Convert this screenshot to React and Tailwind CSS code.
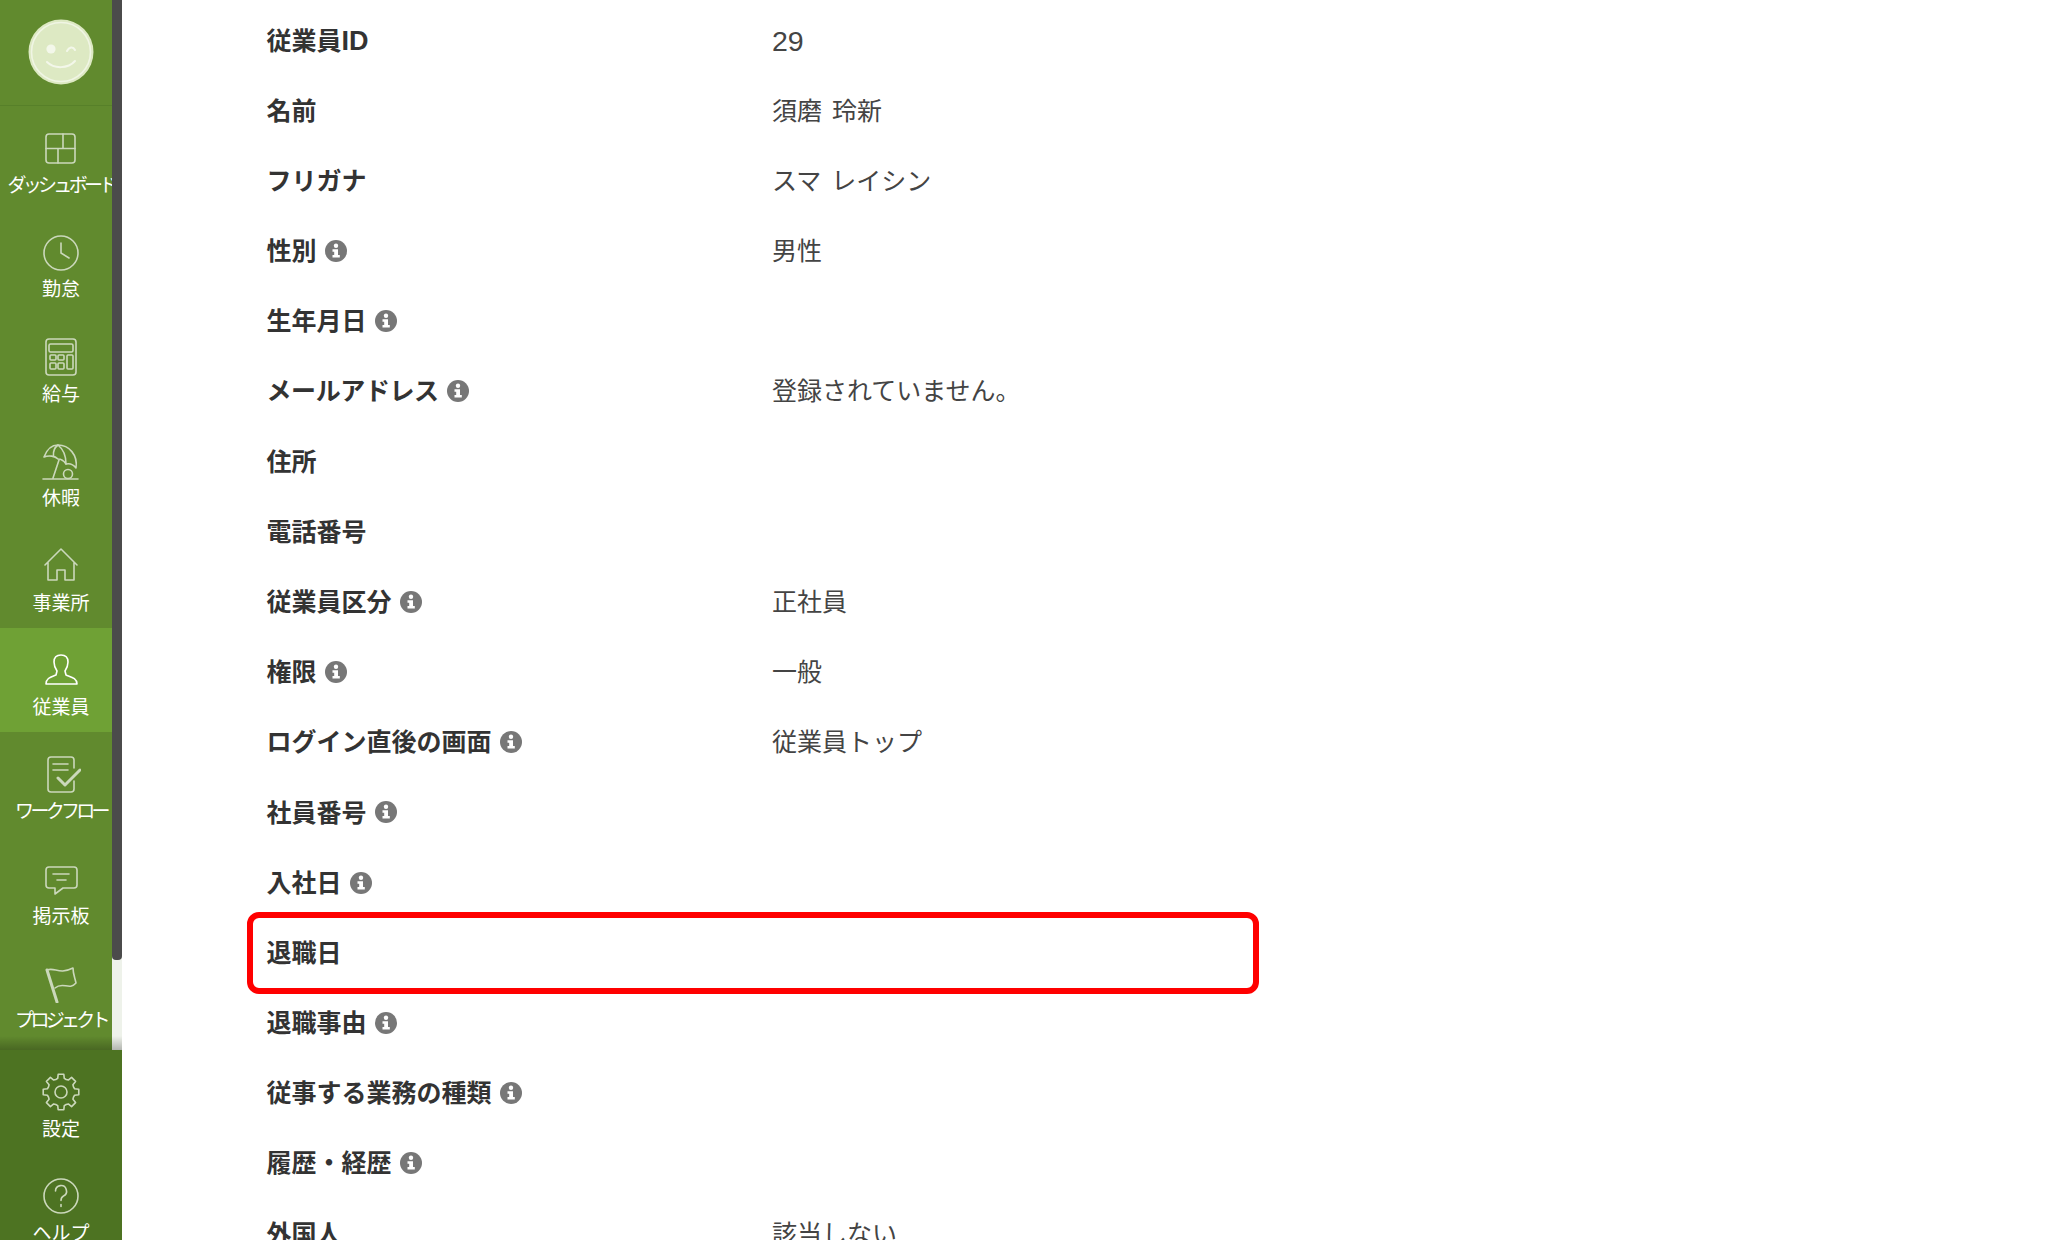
const gearPath = (() => {
  const teeth = 8;
  const pts = [];
  for (let i = 0; i < teeth; i++) {
    const a = (i / teeth) * Math.PI * 2;
    const step = (Math.PI * 2) / teeth;
    [[13.5, -0.5], [14, -0.3], [18, -0.2], [18, 0.2], [14, 0.3], [13.5, 0.5]].forEach(([r, o]) => {
      const t = a + o * step;
      pts.push(`${(20 + r * Math.sin(t)).toFixed(2)} ${(20 - r * Math.cos(t)).toFixed(2)}`);
    });
  }
  return "M" + pts.join("L") + "Z";
})();

const icons = {
  dashboard: (
    <>
      <rect x="5" y="6" width="29" height="29" rx="3" />
      <path d="M5 20.5H34M22 6V20.5M17 20.5V35" />
    </>
  ),
  clock: (
    <>
      <circle cx="20" cy="21" r="17" />
      <path d="M20 11V21L28 26" />
    </>
  ),
  calc: (
    <>
      <rect x="5" y="2" width="30" height="36" rx="3" />
      <rect x="8" y="7" width="24" height="8" rx="1.5" />
      <rect x="9" y="18" width="6" height="5" rx="1" />
      <rect x="17" y="18" width="6" height="5" rx="1" />
      <rect x="9" y="26" width="6" height="6" rx="1" />
      <rect x="17" y="26" width="6" height="6" rx="1" />
      <rect x="26" y="18" width="6" height="14" rx="1" />
    </>
  ),
  parasol: (
    <>
      <path d="M3 16C6 8 11 4 17 4C28 4 37 14 35 27C32 23 29 22 25 23C23 20 20 18 17 18C14 15 8 14 3 16Z" />
      <path d="M17 4C13 7 12 11 12.5 15M17 4C22 8 25 15 25 23M18 19L12 37M2 38H37" />
      <circle cx="27" cy="33" r="4.5" />
    </>
  ),
  home: <path d="M4 19L20 3L36 19M7 16V34H16V24H24V34H33V16" />,
  user: <path d="M5 34C5 28 10 27 15 25L16 21C14 18 13 15 13 12C13 7 16 5 20 5C24 5 27 7 27 12C27 15 26 18 24 21L25 25C30 27 36 28 36 34Z" />,
  flow: (
    <>
      <path d="M33 14V6C33 4 32 3 30 3H10C8 3 7 4 7 6V35C7 37 8 38 10 38H30C32 38 33 37 33 35V27" />
      <path d="M12 10H27M12 16H27" />
      <path d="M17 24L24 31L39 16" strokeWidth="3" />
    </>
  ),
  chat: (
    <>
      <path d="M8 8H33C35 8 36 9 36 11V26C36 28 35 29 33 29H22L14 35V29H8C6 29 5 28 5 26V11C5 9 6 8 8 8Z" />
      <path d="M12 15H28M16 21H25" />
    </>
  ),
  flag: (
    <>
      <path d="M6 7L16 39" strokeWidth="3" />
      <path d="M6 7C14 4 18 12 32 5C32 11 34 15 35 20C28 28 22 18 14 25" />
    </>
  ),
  gear: (
    <>
      <path d={gearPath} />
      <circle cx="20" cy="20" r="6" />
    </>
  ),
  help: (
    <>
      <circle cx="20" cy="20" r="17" />
      <path d="M14.5 15A5.5 5.5 0 1 1 22.5 20C20.5 21 20 22.5 20 24.5M20 28.5V30.5" />
    </>
  ),
};

const Icon = ({ name, active }) => (
  <svg
    viewBox="0 0 40 40"
    className={active ? "w-10 h-10 mx-auto stroke-white" : "w-10 h-10 mx-auto stroke-[#cbd8bb]"}
    fill="none"
    strokeWidth="1.6"
    strokeLinejoin="round"
    strokeLinecap="round"
  >
    {icons[name]}
  </svg>
);

const NavItem = ({ name, label, active, tracking }) => (
  <div className={active ? "h-[104.4px] pt-[22px] bg-[#6fa135] shrink-0" : "h-[104.4px] pt-[22px] shrink-0"}>
    <Icon name={name} active={active} />
    <div className={`h-[35px] leading-[35px] text-center text-[19px] text-white whitespace-nowrap ${tracking || ""}`}>
      {label}
    </div>
  </div>
);

const Info = () => (
  <svg viewBox="0 0 22 22" className="w-[22px] h-[22px] ml-[8px] shrink-0">
    <circle cx="11" cy="11" r="11" fill="#777777" />
    <circle cx="11" cy="5.8" r="2.2" fill="#ffffff" />
    <path d="M7.5 9.3H13V15H14.8V17.6H7.5V15H9.2V11.8H7.5Z" fill="#ffffff" />
  </svg>
);

const rows = [
  ["従業員", "29", false],
  ["名前", "須磨 玲新", false],
  ["フリガナ", "スマ レイシン", false],
  ["性別", "男性", true],
  ["生年月日", "", true],
  ["メールアドレス", "登録されていません。", true],
  ["住所", "", false],
  ["電話番号", "", false],
  ["従業員区分", "正社員", true],
  ["権限", "一般", true],
  ["ログイン直後の画面", "従業員トップ", true],
  ["社員番号", "", true],
  ["入社日", "", true],
  ["退職日", "", false, true],
  ["退職事由", "", true],
  ["従事する業務の種類", "", true],
  ["履歴・経歴", "", true],
  ["外国人", "該当しない", false],
];

export default function App() {
  return (
    <div className="flex h-[1240px] overflow-hidden bg-white font-['Liberation_Sans','Noto_Sans_CJK_JP',sans-serif]">
      <aside className="w-[122px] shrink-0 flex flex-col bg-[#618a2e]">
        <div className="relative flex-1 min-h-0 overflow-hidden">
          <div className="h-[106px] border-b border-[#578029] flex items-center justify-center">
            <svg viewBox="0 0 66 66" className="w-[66px] h-[66px] mt-[-2px]">
              <circle cx="33" cy="33" r="32.5" fill="#dde9c3" />
              <circle cx="33" cy="33" r="29.5" fill="none" stroke="#f0f5e4" strokeWidth="1.6" />
              <circle cx="23" cy="30" r="4.6" fill="#f3f7ea" />
              <path d="M39 32C41 28 45 27 47 31" fill="none" stroke="#f3f7ea" strokeWidth="2" strokeLinecap="round" />
              <path d="M19 43C26 50 40 50 47 42" fill="none" stroke="#f3f7ea" strokeWidth="2" strokeLinecap="round" />
            </svg>
          </div>
          <NavItem name="dashboard" label="ダッシュボード" tracking="tracking-[-3.7px]" />
          <NavItem name="clock" label="勤怠" />
          <NavItem name="calc" label="給与" />
          <NavItem name="parasol" label="休暇" />
          <NavItem name="home" label="事業所" />
          <NavItem name="user" label="従業員" active />
          <NavItem name="flow" label="ワークフロー" tracking="tracking-[-3.7px]" />
          <NavItem name="chat" label="掲示板" />
          <NavItem name="flag" label="プロジェクト" tracking="tracking-[-3.7px]" />
          <div className="absolute right-0 top-0 bottom-0 w-[10px] bg-[#eef2ea]">
            <div className="h-[960px] bg-[#4b4b4b] rounded-b-[4px]" />
          </div>
          <div className="absolute left-0 right-0 bottom-0 h-[14px] bg-gradient-to-b from-transparent to-[#00000040]" />
        </div>
        <div className="h-[190px] shrink-0 bg-[#4d7322]">
          <NavItem name="gear" label="設定" />
          <NavItem name="help" label="ヘルプ" />
        </div>
      </aside>
      <main className="flex-1 min-w-0 pt-[5.3px] pl-[144.5px] text-[25px] text-[#444444]">
        {rows.map(([label, value, info, marked]) => (
          <div key={label} className="relative flex items-center h-[70.2px]">
            <div className="w-[505.5px] shrink-0 flex items-center font-bold text-[#333333]">
              <span className={label === "メールアドレス" ? "pt-[1.6px] tracking-[-0.4px]" : "pt-[1.6px]"}>
                {label}
                {value === "29" && <span className="text-[27px]">ID</span>}
              </span>
              {info && <Info />}
            </div>
            <div className={value === "29" ? "pt-[1.6px] text-[28.5px] [word-spacing:3px]" : "pt-[1.6px] [word-spacing:3px]"}>{value}</div>
            {marked && (
              <div className="absolute left-[-19.5px] top-[-5.3px] w-[1012px] h-[82px] border-[6px] border-[#ff0000] rounded-[12px]" />
            )}
          </div>
        ))}
      </main>
    </div>
  );
}
